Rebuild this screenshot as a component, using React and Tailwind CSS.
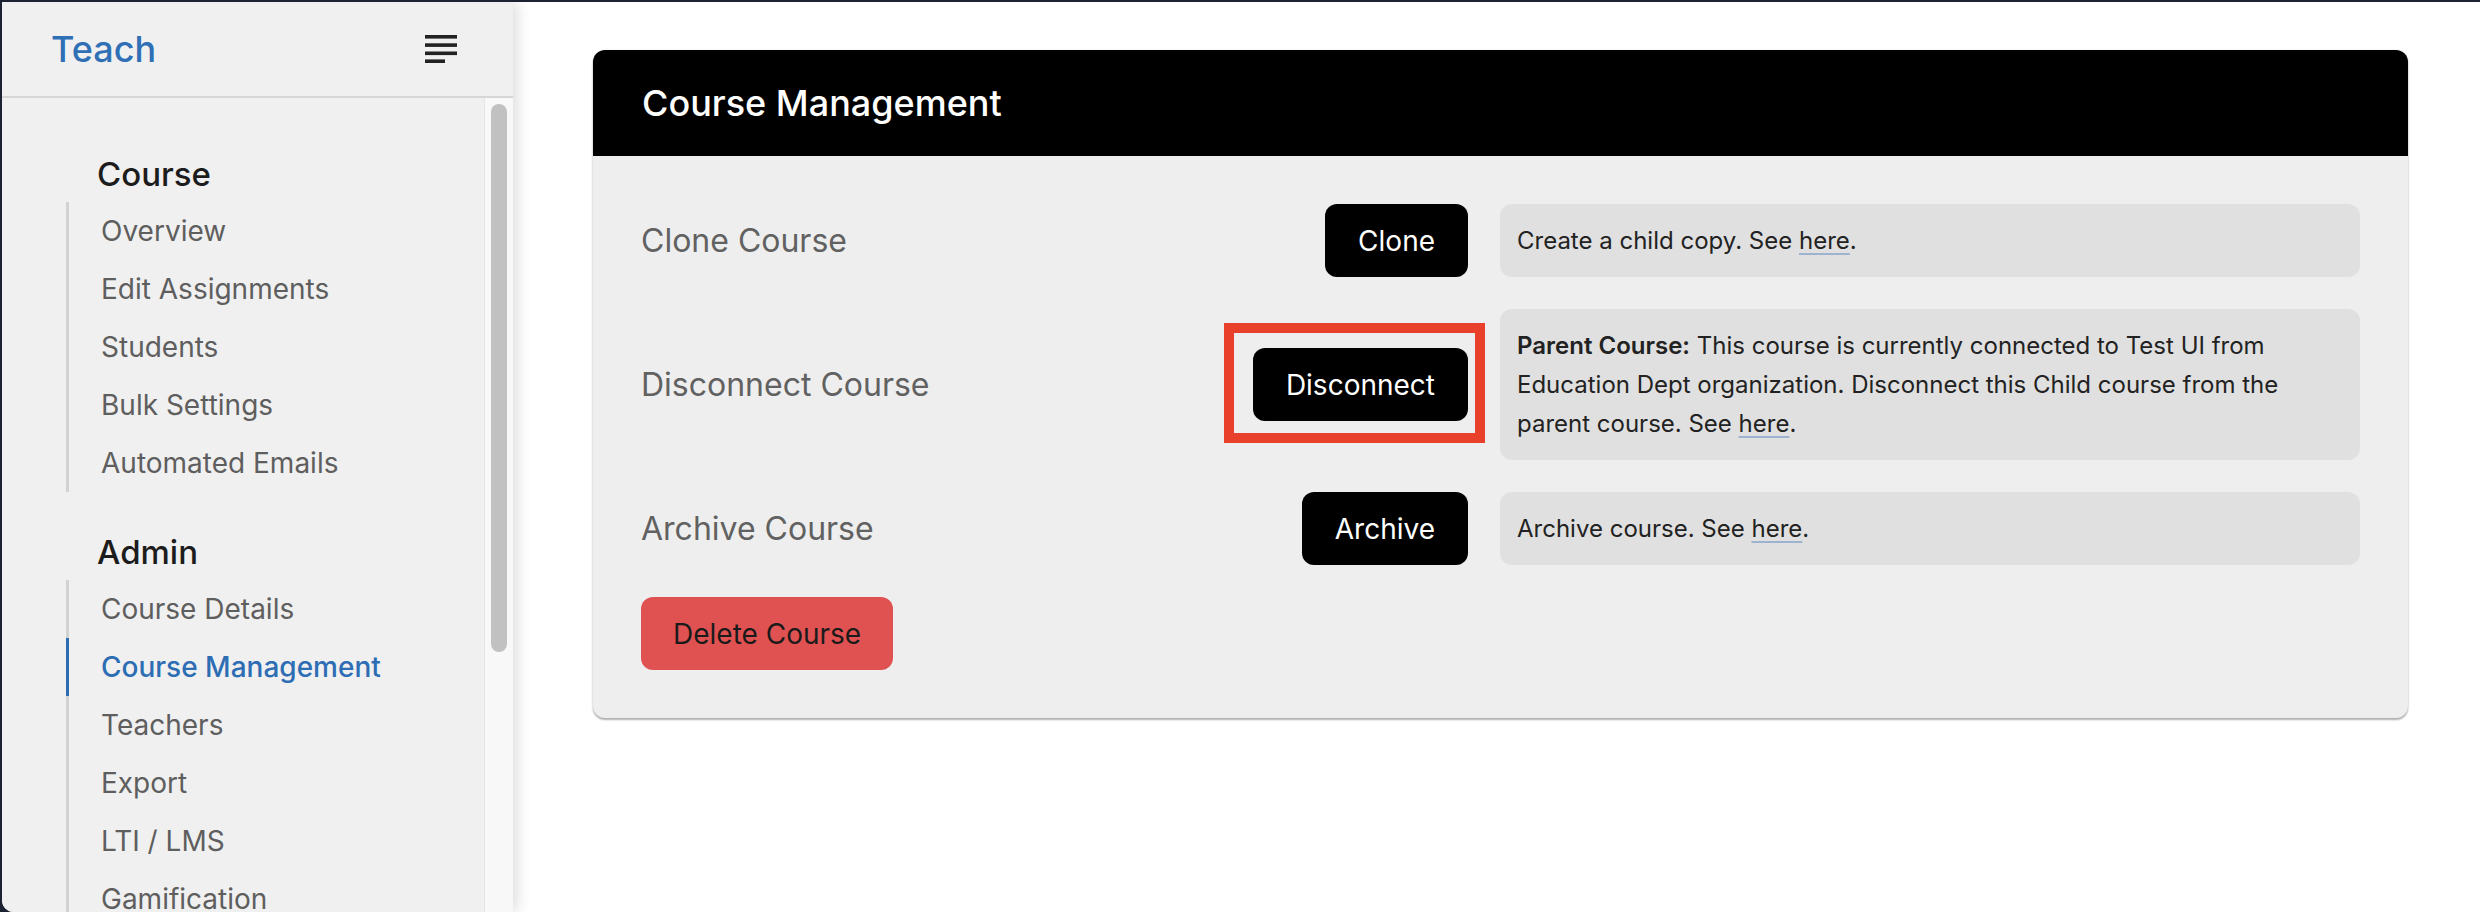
import React from "react";

function NavSection({ title, items, active, first }) {
  return (
    <div className={first ? "" : "mt-[40px]"}>
      <div className="pl-[31px] h-[40px] leading-[40px] text-[33px] font-medium text-[#1c1c1c] mb-[8px]">
        {title}
      </div>
      <ul className="border-l-[3px] border-[#d2d2d2]">
        {items.map((it) => (
          <li
            key={it}
            className={
              it === active
                ? "relative -ml-[3px] border-l-[3px] border-[#2d6db4] pl-[32px] h-[58px] flex items-center text-[28px] font-medium text-[#2d6db4]"
                : "pl-[32px] h-[58px] flex items-center text-[28px] text-[#5e5e5e]"
            }
          >
            {it}
          </li>
        ))}
      </ul>
    </div>
  );
}

function Here() {
  return (
    <span className="underline decoration-[#9db3cf] decoration-2 underline-offset-[4px]">here</span>
  );
}

function Row({ label, button, children, highlight }) {
  return (
    <div className="flex items-center">
      <div className="flex-1 text-[32px] text-[#616161]">{label}</div>
      <div className="relative">
        <button className="h-[73px] px-[33px] rounded-[12px] bg-black text-white text-[28px] leading-none">
          {button}
        </button>
        {highlight && (
          <div className="absolute -left-[29px] -right-[17px] -top-[25px] -bottom-[22px] border-[10px] border-[#e8402a] pointer-events-none" />
        )}
      </div>
      <div className="ml-[32px] w-[860px] shrink-0 bg-[#e0e0e0] rounded-[12px] px-[17px] py-[17px] text-[24px] leading-[39px] text-[#222222]">
        {children}
      </div>
    </div>
  );
}

export default function App() {
  return (
    <div className="w-[2480px] h-[912px] bg-[#1c2232] pt-[2px] pl-[2px] overflow-hidden font-[Inter,sans-serif]">
      <div className="flex h-[910px] bg-white rounded-bl-[12px] overflow-hidden">
        <aside className="w-[511px] shrink-0 bg-[#f0f0f0] flex flex-col relative z-10 shadow-[4px_0_14px_rgba(0,0,0,0.14)]">
          <div className="h-[94px] shrink-0 flex items-center justify-between pl-[49px] pr-[56px]">
            <span className="text-[36px] font-medium text-[#2f6fb6] leading-none">Teach</span>
            <svg width="32" height="28" viewBox="0 0 32 28" aria-hidden="true">
              <rect x="0" y="0" width="32" height="3.6" fill="#222" />
              <rect x="0" y="8.3" width="32" height="3.6" fill="#222" />
              <rect x="0" y="16.5" width="32" height="3.6" fill="#222" />
              <rect x="0" y="24.4" width="20" height="3.6" fill="#222" />
            </svg>
          </div>
          <div className="h-[2px] bg-[#d6d6d6] shrink-0" />
          <div className="flex flex-1 min-h-0">
            <nav className="flex-1 overflow-hidden pt-[56px] pl-[64px]">
              <NavSection
                first
                title="Course"
                items={["Overview", "Edit Assignments", "Students", "Bulk Settings", "Automated Emails"]}
              />
              <NavSection
                title="Admin"
                active="Course Management"
                items={["Course Details", "Course Management", "Teachers", "Export", "LTI / LMS", "Gamification"]}
              />
            </nav>
            <div className="w-[29px] shrink-0 bg-[#f8f8f8] border-l border-[#e6e6e6] pt-[6px] pl-[6px]">
              <div className="w-[16px] h-[548px] rounded-full bg-[#c1c1c1]" />
            </div>
          </div>
        </aside>
        <main className="flex-1 pl-[80px] pr-[72px] pt-[48px]">
          <div className="rounded-[12px] overflow-hidden bg-[#eeeeee] shadow-[0_2px_2px_rgba(0,0,0,0.3),0_0_3px_rgba(0,0,0,0.08)]">
            <div className="h-[106px] bg-black flex items-center px-[49px]">
              <h1 className="text-[36px] font-medium text-white leading-none">Course Management</h1>
            </div>
            <div className="p-[48px]">
              <div className="flex flex-col gap-[32px]">
                <Row label="Clone Course" button="Clone">
                  Create a child copy. See <Here />.
                </Row>
                <Row label="Disconnect Course" button="Disconnect" highlight>
                  <span className="font-semibold">Parent Course:</span> This course is currently connected to Test UI from
                  <br />
                  Education Dept organization. Disconnect this Child course from the
                  <br />
                  parent course. See <Here />.
                </Row>
                <Row label="Archive Course" button="Archive">
                  Archive course. See <Here />.
                </Row>
              </div>
              <button className="mt-[32px] h-[73px] px-[32px] rounded-[12px] bg-[#e05252] text-[#1a1a1a] text-[28px] leading-none">
                Delete Course
              </button>
            </div>
          </div>
        </main>
      </div>
    </div>
  );
}
